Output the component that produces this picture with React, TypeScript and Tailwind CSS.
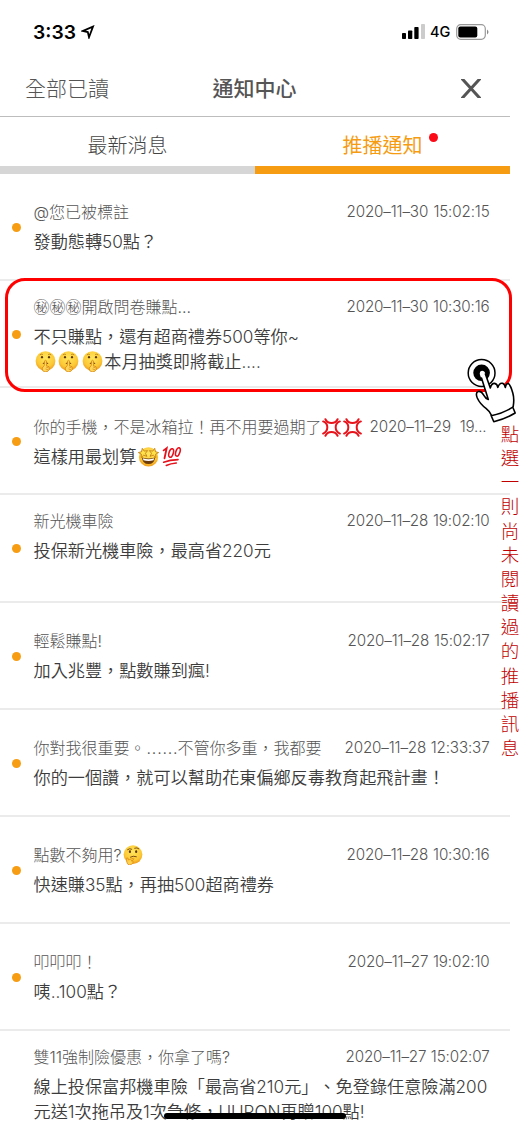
import type { ReactNode } from "react";

function Shush() {
  return (
    <svg viewBox="0 0 24 24" className="inline-block h-[21px] w-[21px] mx-[1.3px] align-[-4px]">
      <defs>
        <radialGradient id="face" cx="50%" cy="35%" r="65%">
          <stop offset="0" stopColor="#ffe65c" />
          <stop offset="0.7" stopColor="#fcc835" />
          <stop offset="1" stopColor="#ef9a1a" />
        </radialGradient>
      </defs>
      <circle cx="12" cy="11.5" r="11.3" fill="url(#face)" />
      <ellipse cx="8" cy="7" rx="1.2" ry="1.4" fill="#5b3410" />
      <ellipse cx="16" cy="7" rx="1.2" ry="1.4" fill="#5b3410" />
      <path d="M5.5 4.5Q7 3 9 4M15 4Q17 3 18.5 4.5" stroke="#a86a14" strokeWidth="0.8" fill="none" />
      <path d="M9 14.5Q12 12.5 15 14.5" stroke="#70410f" strokeWidth="1.2" fill="none" />
      <path d="M11 11.2Q12.2 10 13 11.2L13.2 17Q17 17 16.6 20.5Q15.5 24 11.5 24Q8 23.5 8.2 19.5L10.6 16.5Z" fill="#ffd65a" stroke="#d88612" strokeWidth="0.9" />
      <path d="M12.5 18.2l3.2 1.3M12 20.5l3 1" stroke="#d88612" strokeWidth="0.8" />
    </svg>
  );
}

function StarEyes() {
  const star = "M0-4.4L1.2-1.5L4.3-1.3L1.9.7L2.7 3.7L0 2L-2.7 3.7L-1.9.7L-4.3-1.3L-1.2-1.5Z";
  return (
    <svg viewBox="0 0 24 24" className="inline-block h-[21px] w-[21px] mx-[1.3px] align-[-4px]">
      <circle cx="12" cy="12.5" r="11" fill="url(#face)" />
      <path d="M4.5 13Q12 15.5 19.5 13Q19 20.5 12 20.5Q5 20.5 4.5 13Z" fill="#6c3b0c" />
      <path d="M5.5 14Q12 16.5 18.5 14L17.8 16.3Q12 18 6.2 16.3Z" fill="#fff" />
      <path d={star} transform="translate(6 8) rotate(-12) scale(1.25)" fill="#ffe14a" stroke="#b66c0c" strokeWidth="0.6" />
      <path d={star} transform="translate(18 8) rotate(12) scale(1.25)" fill="#ffe14a" stroke="#b66c0c" strokeWidth="0.6" />
    </svg>
  );
}

function Hundred() {
  return (
    <svg viewBox="0 0 24 24" className="inline-block h-[21px] w-[21px] mx-[1.3px] align-[-4px]" fill="none" stroke="#e3121c" strokeLinecap="round">
      <path d="M3 5L6.5 2.5L4 14" strokeWidth="2.1" />
      <ellipse cx="11.6" cy="8" rx="2.4" ry="5" transform="rotate(18 11.6 8)" strokeWidth="1.8" />
      <ellipse cx="19.3" cy="6.8" rx="2.3" ry="5" transform="rotate(18 19.3 6.8)" strokeWidth="1.8" />
      <path d="M3 18.5Q10 16 19.5 15.6" strokeWidth="1.8" />
      <path d="M6 22.3Q11 20 17.5 19.4" strokeWidth="1.8" />
    </svg>
  );
}

function Anger() {
  return (
    <svg viewBox="0 0 20 20" className="inline-block h-[19px] w-[19px] mx-[0.8px] align-[-4px]" fill="none" stroke="#e8141c" strokeWidth="2.1" strokeLinecap="round">
      <path d="M3.6 1.3Q5.5 5.3 10 5.3Q14.5 5.3 16.4 1.3M3.6 18.7Q5.5 14.7 10 14.7Q14.5 14.7 16.4 18.7" />
      <path d="M1.2 3.6Q5.6 5.2 5.6 9.8Q5.6 14.5 1.2 16.4M18.8 3.6Q14.4 5.2 14.4 9.8Q14.4 14.5 18.8 16.4" />
    </svg>
  );
}

function Thinking() {
  return (
    <svg viewBox="0 0 24 24" className="inline-block h-[20px] w-[20px] ml-[1px] align-[-4px]">
      <circle cx="12" cy="11.5" r="11.2" fill="url(#face)" />
      <ellipse cx="8.3" cy="8" rx="1.3" ry="1.7" fill="#5b3410" />
      <ellipse cx="15.8" cy="8" rx="1.3" ry="1.7" fill="#5b3410" />
      <path d="M5.5 5.5Q8 3.5 10.5 5M14 3.8Q17 2.6 19 4.5M9 14.5Q12 12.6 16 14" stroke="#70410f" strokeWidth="1.1" fill="none" strokeLinecap="round" />
      <path d="M4.5 15.5Q6 14.5 6.6 18L12.5 15.8Q14 16.5 12.5 17.6L9.8 19H12Q12.5 23.7 7.5 23.8Q3.8 23.5 4.5 15.5Z" fill="#ffd04a" stroke="#dc8912" strokeWidth="0.9" />
    </svg>
  );
}

type Notice = { title: ReactNode; date: string; body: ReactNode; width: string; read?: boolean };

const notices: Notice[] = [
  { title: "@您已被標註", date: "2020–11–30 15:02:15", body: "發動態轉50點？", width: "w-[143px]" },
  {
    title: "㊙㊙㊙開啟問卷賺點...",
    date: "2020–11–30 10:30:16",
    body: (
      <>
        不只賺點，還有超商禮券500等你~
        <br />
        <Shush />
        <Shush />
        <Shush />
        本月抽獎即將截止....
      </>
    ),
    width: "w-[143px]",
  },
  {
    title: (
      <>
        你的手機，不是冰箱拉！再不用要過期了
        <Anger />
        <Anger />
      </>
    ),
    date: "2020–11–29 19...",
    body: (
      <>
        這樣用最划算
        <StarEyes />
        <Hundred />
      </>
    ),
    width: "w-[117px] mr-[3px]",
  },
  {
    title: "新光機車險",
    date: "2020–11–28 19:02:10",
    body: (
      <>
        投保新光機車險，最高省220元
        <br />
        &nbsp;
      </>
    ),
    width: "w-[143px]",
  },
  { title: "輕鬆賺點!", date: "2020–11–28 15:02:17", body: "加入兆豐，點數賺到瘋!", width: "w-[142px]" },
  {
    title: (
      <>
        你對我很重要。<span className="inline-block w-8 pl-px font-[Inter] leading-none tracking-[0.8px]">......</span>不管你多重，我都要
      </>
    ),
    date: "2020–11–28 12:33:37",
    body: "你的一個讚，就可以幫助花東偏鄉反毒教育起飛計畫！",
    width: "w-[145px]",
  },
  {
    title: (
      <>
        點數不夠用?
        <Thinking />
      </>
    ),
    date: "2020–11–28 10:30:16",
    body: "快速賺35點，再抽500超商禮券",
    width: "w-[143px]",
  },
  { title: "叩叩叩！", date: "2020–11–27 19:02:10", body: "咦..100點？", width: "w-[142px]" },
  {
    title: "雙11強制險優惠，你拿了嗎?",
    date: "2020–11–27 15:02:07",
    body: (
      <>
        線上投保富邦機車險「最高省210元」、免登錄任意險滿200
        <br />
        元送1次拖吊及1次急修，UUPON再贈100點!
      </>
    ),
    width: "w-[144px]",
    read: true,
  },
];

function NoticeRow({ item }: { item: Notice }) {
  return (
    <li className="flex h-[107.15px] shrink-0 items-center border-b-2 border-[#ebebeb] pt-[2px] pl-3">
      <span className={`h-[9px] w-[9px] shrink-0 rounded-full ${item.read ? "bg-transparent" : "bg-[#f79d14]"}`} />
      <div className="ml-[12.5px] flex w-[456px] shrink-0 flex-col gap-[6px] whitespace-nowrap [text-spacing-trim:space-all]">
        <div className="flex h-6 items-center justify-between text-[16px] leading-6 font-light text-[#555]">
          <span>{item.title}</span>
          <span className={`flex shrink-0 justify-between font-[Inter] text-[15.2px] ${item.width}`}>
            {item.date.split(" ").map((part) => (
              <span key={part} className="tracking-[-0.15px]">{part}</span>
            ))}
          </span>
        </div>
        <p className="text-[17.15px] leading-[24.5px] font-[350] text-[#3c3c3c]">{item.body}</p>
      </div>
    </li>
  );
}

function StatusBar() {
  return (
    <div className="flex h-[62px] shrink-0 items-center justify-between pt-px pr-[21px] pl-[33px] text-black">
      <div className="flex items-center gap-[5px]">
        <span className="font-[Inter] text-[19.3px] leading-6 font-semibold">3:33</span>
        <svg viewBox="0 0 14 14" className="h-[14px] w-[14px]" fill="none" stroke="#000" strokeWidth="1.8" strokeLinejoin="miter">
          <path d="M12 1.6L1.8 6L6.8 7L8 12.2Z" />
        </svg>
      </div>
      <div className="flex items-center">
        <svg viewBox="0 0 23 15" className="h-[15px] w-[23px]">
          <rect x="0" y="9" width="4" height="6" rx="0.8" />
          <rect x="6" y="6.5" width="4.3" height="8.5" rx="0.8" />
          <rect x="12.3" y="3" width="4.3" height="12" rx="0.8" />
          <rect x="19" y="0" width="4" height="15" rx="0.8" fill="#ccc" />
        </svg>
        <span className="ml-[5px] w-[21px] font-[Inter] text-[14.5px] leading-6 font-medium">4G</span>
        <svg viewBox="0 0 33 16" className="ml-[5px] h-[16px] w-[33px]">
          <rect x="0.7" y="0.7" width="28.6" height="14.6" rx="4" fill="none" stroke="#999" strokeWidth="1.2" />
          <rect x="2.3" y="2.5" width="19" height="11" rx="2" />
          <path d="M31 5.5Q34 8 31 10.5Z" fill="#888" />
        </svg>
      </div>
    </div>
  );
}

function TapHand() {
  return (
    <svg viewBox="0 0 52 67" className="absolute top-[357px] left-[466px] h-[67px] w-[52px]" stroke="#000" strokeLinejoin="round" strokeLinecap="round">
      <circle cx="15.6" cy="16" r="13.4" fill="#fff" strokeWidth="1.5" />
      <circle cx="15.6" cy="15.8" r="8.3" stroke="none" />
      <path
        d="M14 18Q13 14 16 13.8Q18.6 13.8 19.4 17L24.3 30Q26 26 28.5 26.3Q31.3 26.8 31.8 30Q33.5 25.5 36.5 26.3Q38.8 27 39.3 29.5Q40.5 26 42.5 26.5Q44.8 29 47.5 38L47.3 50L25.5 58.5Q23.5 54.5 20 51.5Q13.5 47 10.6 39Q9.8 34.5 13.5 34Q16 34.5 17.5 38L20.5 41L21 37Z"
        fill="#fff"
        stroke="none"
      />
      <path
        d="M15.5 21L22.3 42.5Q19.5 41.5 17.5 37.8Q15 33.5 12 34.6Q9.2 36 11.3 41Q14 47 20 51.3Q23.5 54 25.3 58M19.4 17L24.3 31Q25.5 26.3 28.5 26.4Q31.3 26.8 31.8 30.5Q33.5 25.5 36.5 26.3Q38.8 27 39.3 30.5Q40.2 26.2 42.5 26.5Q44.8 28.5 46.8 36Q48.5 42 47.2 49.5"
        fill="none"
        strokeWidth="1.6"
      />
      <path d="M25.2 58.8Q37 56.5 46.8 50.2L49.2 56Q40 61.5 27.8 64.8Z" fill="#fff" strokeWidth="1.6" />
    </svg>
  );
}

export default function App() {
  return (
    <div className="relative flex h-[1129px] w-[523px] overflow-hidden bg-white font-['Inter','Noto_Sans_CJK_TC',sans-serif]">
      <main className="flex w-[510px] shrink-0 flex-col">
        <StatusBar />
        <header className="flex h-[55px] shrink-0 items-center border-b border-[#bdbdbd] pr-[29.5px] pb-[2px] pl-[25px] text-[21px] leading-none text-[#555]">
          <span className="w-[187.5px] font-light">全部已讀</span>
          <h1 className="flex-1 font-medium">通知中心</h1>
          <svg viewBox="0 0 20 19" className="h-[19px] w-[20px]" stroke="#555" strokeWidth="3">
            <path d="M0 -1.5L20 20.5M20 -1.5L0 20.5" />
          </svg>
        </header>
        <nav className="flex h-[57px] shrink-0 text-[20px] leading-none">
          <div className="flex flex-1 items-center justify-center border-b-8 border-[#d6d6d6] pt-[9px] font-light text-[#444]">最新消息</div>
          <div className="relative flex flex-1 items-center justify-center border-b-8 border-[#f59c12] pt-[9px] text-[#f59c12]">
            推播通知
            <span className="absolute top-[16px] left-[174px] h-[9px] w-[9px] rounded-full bg-[#fb0b18]" />
          </div>
        </nav>
        <ul className="flex flex-col">
          {notices.map((item, i) => (
            <NoticeRow key={i} item={item} />
          ))}
        </ul>
      </main>
      <div className="absolute top-[278px] left-[5px] h-[114px] w-[507px] rounded-[20px] border-3 border-[#ff0000]" />
      <TapHand />
      <div className="absolute top-[422px] left-[500px] flex w-[20px] flex-col items-center text-[18.5px] leading-[24.15px] font-light text-[#c00000]">
        {Array.from("點選一則尚未閱讀過的推播訊息").map((char, i) => (
          <span key={i}>{char}</span>
        ))}
      </div>
      <div className="absolute top-[1113px] left-[164px] h-[6px] w-[182px] rounded-full bg-black" />
    </div>
  );
}
